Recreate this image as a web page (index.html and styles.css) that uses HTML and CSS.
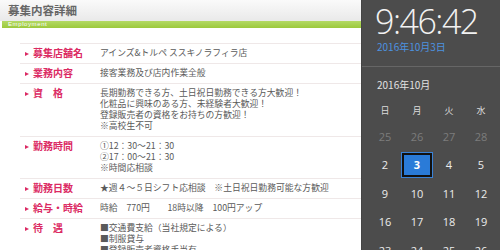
FILE: index.html
```html
<!DOCTYPE html>
<html lang="ja">
<head>
  <meta charset="UTF-8">
  <meta name="viewport" content="width=device-width, initial-scale=1.0">
  <title>募集内容詳細</title>
  <link rel="stylesheet" href="styles.css">
</head>
<body>

  <div class="screen">
    <div class="detail">
      <div class="detail-head"><h1>募集内容詳細</h1></div>
      <div class="detail-bar">Employment</div>

      <table class="detail-table">
        <tr>
          <th><span class="mark"></span>募集店舗名</th>
          <td>アインズ&amp;トルペ ススキノラフィラ店</td>
        </tr>
        <tr>
          <th><span class="mark"></span>業務内容</th>
          <td>接客業務及び店内作業全般</td>
        </tr>
        <tr>
          <th><span class="mark"></span>資　格</th>
          <td>長期勤務できる方、土日祝日勤務できる方大歓迎！<br>化粧品に興味のある方、未経験者大歓迎！<br>登録販売者の資格をお持ちの方歓迎！<br>※高校生不可</td>
        </tr>
        <tr>
          <th><span class="mark"></span>勤務時間</th>
          <td>①12：30～21：30<br>②17：00～21：30<br>※時間応相談</td>
        </tr>
        <tr>
          <th><span class="mark"></span>勤務日数</th>
          <td>★週４～５日シフト応相談　※土日祝日勤務可能な方歓迎</td>
        </tr>
        <tr>
          <th><span class="mark"></span>給与・時給</th>
          <td>時給　770円　　18時以降　100円アップ</td>
        </tr>
        <tr>
          <th><span class="mark"></span>待　遇</th>
          <td>■交通費支給（当社規定による）<br>■制服貸与<br>■登録販売者資格手当有</td>
        </tr>
      </table>
    </div>

    <div class="clock">
      <div class="clock-time">9:46:42</div>
      <div class="clock-date">2016年10月3日</div>
      <div class="clock-cal">
        <div class="cal-month">2016年10月</div>
        <div class="cal-grid">
          <span class="cal-head">日</span><span class="cal-head">月</span><span class="cal-head">火</span><span class="cal-head">水</span><span class="cal-head">木</span><span class="cal-head">金</span><span class="cal-head">土</span>
          <span class="cal-day other">25</span><span class="cal-day other">26</span><span class="cal-day other">27</span><span class="cal-day other">28</span><span class="cal-day other">29</span><span class="cal-day other">30</span><span class="cal-day">1</span>
          <span class="cal-day">2</span><span class="cal-day today">3</span><span class="cal-day">4</span><span class="cal-day">5</span><span class="cal-day">6</span><span class="cal-day">7</span><span class="cal-day">8</span>
          <span class="cal-day">9</span><span class="cal-day">10</span><span class="cal-day">11</span><span class="cal-day">12</span><span class="cal-day">13</span><span class="cal-day">14</span><span class="cal-day">15</span>
          <span class="cal-day">16</span><span class="cal-day">17</span><span class="cal-day">18</span><span class="cal-day">19</span><span class="cal-day">20</span><span class="cal-day">21</span><span class="cal-day">22</span>
          <span class="cal-day">23</span><span class="cal-day">24</span><span class="cal-day">25</span><span class="cal-day">26</span><span class="cal-day">27</span><span class="cal-day">28</span><span class="cal-day">29</span>
        </div>
      </div>
    </div>
  </div>

</body>
</html>
```

FILE: styles.css
```css
body {
  margin: 0;
  font-family: "Noto Sans CJK JP", "Noto Sans", sans-serif;
  background-color: #fff;
}

.screen {
  display: flex;
  width: 500px;
  height: 250px;
  overflow: hidden;
}

/* Left side: job detail page */
.detail {
  width: 361px;
  flex-shrink: 0;
}

.detail-head {
  height: 21px;
  background: linear-gradient(#fafafa, #e9e9e9);
}

.detail-head h1 {
  margin: 0;
  padding-left: 8px;
  font-size: 11.5px;
  line-height: 21px;
  color: #666;
  font-weight: bold;
}

.detail-bar {
  margin-left: 2px;
  height: 7px;
  padding-left: 6px;
  background: linear-gradient(#b3d964, #9cc93c);
  color: #fff;
  font-family: "Liberation Sans", sans-serif;
  font-size: 6px;
  line-height: 7px;
  letter-spacing: 0.6px;
}

.detail-table {
  margin: 15px 0 0 20px;
  width: 341px;
  border-collapse: collapse;
}

.detail-table tr {
  border-top: 1px solid #efe8e8;
}

.detail-table th,
.detail-table td {
  vertical-align: top;
  text-align: left;
  padding: 3px 0 5px 0;
}

.detail-table th {
  width: 75px;
  padding-left: 5px;
  font-size: 10px;
  line-height: 11px;
  color: #db2a63;
  font-weight: bold;
  white-space: nowrap;
}

.detail-table td {
  font-size: 8.8px;
  line-height: 11px;
  color: #5a5a5a;
  white-space: nowrap;
}

.mark {
  display: inline-block;
  width: 0;
  height: 0;
  border-left: 4px solid #db2a63;
  border-top: 2.5px solid transparent;
  border-bottom: 2.5px solid transparent;
  margin-right: 4px;
  vertical-align: 1px;
}

/* Right side: clock flyout */
.clock {
  flex: 1;
  background-color: #4c4c4c;
  border-left: 1px solid #444;
  overflow: hidden;
}

.clock-time {
  padding: 0 0 0 13px;
  margin-top: 2px;
  font-family: "Open Sans", sans-serif;
  font-weight: 300;
  font-size: 34px;
  line-height: 38px;
  letter-spacing: -1.5px;
  color: #f2f2f2;
  white-space: nowrap;
}

.clock-date {
  padding-left: 15px;
  font-size: 10px;
  line-height: 14px;
  color: #4c93e0;
  height: 26px;
  border-bottom: 1px solid #666;
}

.clock-cal {
  padding-left: 7px;
}

.cal-month {
  padding-left: 8px;
  margin-top: 11px;
  font-size: 10px;
  line-height: 14px;
  color: #e2e2e2;
}

.cal-grid {
  display: grid;
  grid-template-columns: repeat(7, 32px);
  grid-auto-rows: 28.5px;
  grid-template-rows: 24px;
  margin-top: 6px;
  width: 224px;
}

.cal-head {
  display: flex;
  align-items: center;
  justify-content: center;
  font-size: 9px;
  color: #dcdcdc;
}

.cal-day {
  display: flex;
  align-items: center;
  justify-content: center;
  font-family: "Open Sans", sans-serif;
  font-size: 11px;
  color: #ececec;
}

.cal-day.other {
  color: #7c7c7c;
}

.cal-day.today {
  margin: 2px 1px;
  border: 2px solid #111;
  box-shadow: 0 0 0 1px #3a82d6;
  background-color: #2a7bd8;
  font-weight: bold;
  color: #fff;
}
```
